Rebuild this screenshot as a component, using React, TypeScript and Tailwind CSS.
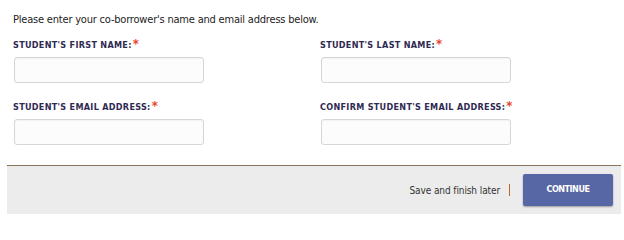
import React from "react";

const font = { fontFamily: '"DejaVu Sans Condensed", "DejaVu Sans", Tahoma, sans-serif' };

function Field({ label }: { label: string }) {
  return (
    <div className="flex flex-col">
      <div className="h-[12px] flex items-center text-[9px] font-bold leading-[12px] tracking-[0.3px] text-[#2f2a52]">
        <span>{label}</span>
        <span className="text-[#e8432b] text-[13px] leading-none relative top-[-2px] ml-[1px]">*</span>
      </div>
      <div className="mt-[6px] ml-[1px] w-[190px] h-[26px] rounded-[3px] border border-[#d6d6d6] bg-[#fcfcfc] shadow-[inset_0_1px_1px_rgba(0,0,0,0.04)]" />
    </div>
  );
}

export default function App() {
  return (
    <div className="w-[624px] h-[214px] bg-white overflow-hidden flex flex-col" style={font}>
      <div className="px-[13px] pt-[12px] text-[11px] leading-[16px] tracking-[-0.2px] text-[#222]">
        Please enter your co-borrower's name and email address below.
      </div>
      <div className="grid grid-cols-[307px_1fr] gap-y-[18px] px-[13px] mt-[11px]">
        <Field label="STUDENT'S FIRST NAME:" />
        <Field label="STUDENT'S LAST NAME:" />
        <Field label="STUDENT'S EMAIL ADDRESS:" />
        <Field label="CONFIRM STUDENT'S EMAIL ADDRESS:" />
      </div>
      <div className="mt-auto ml-[7px] mr-[3px] h-[49px] shrink-0 border-t border-[#8b735c] bg-[#ececec] flex items-center justify-end pr-[8px]">
        <span className="text-[10px] tracking-[-0.1px] text-[#333]">Save and finish later</span>
        <span className="ml-[9px] w-[1px] h-[12px] bg-[#c0652a]" />
        <button className="ml-[13px] w-[90px] h-[32px] bg-[#5767a5] text-white text-[9px] font-bold rounded-[2px] shadow-[0_1px_2px_rgba(0,0,0,0.35)] tracking-[-0.5px]">
          CONTINUE
        </button>
      </div>
    </div>
  );
}
